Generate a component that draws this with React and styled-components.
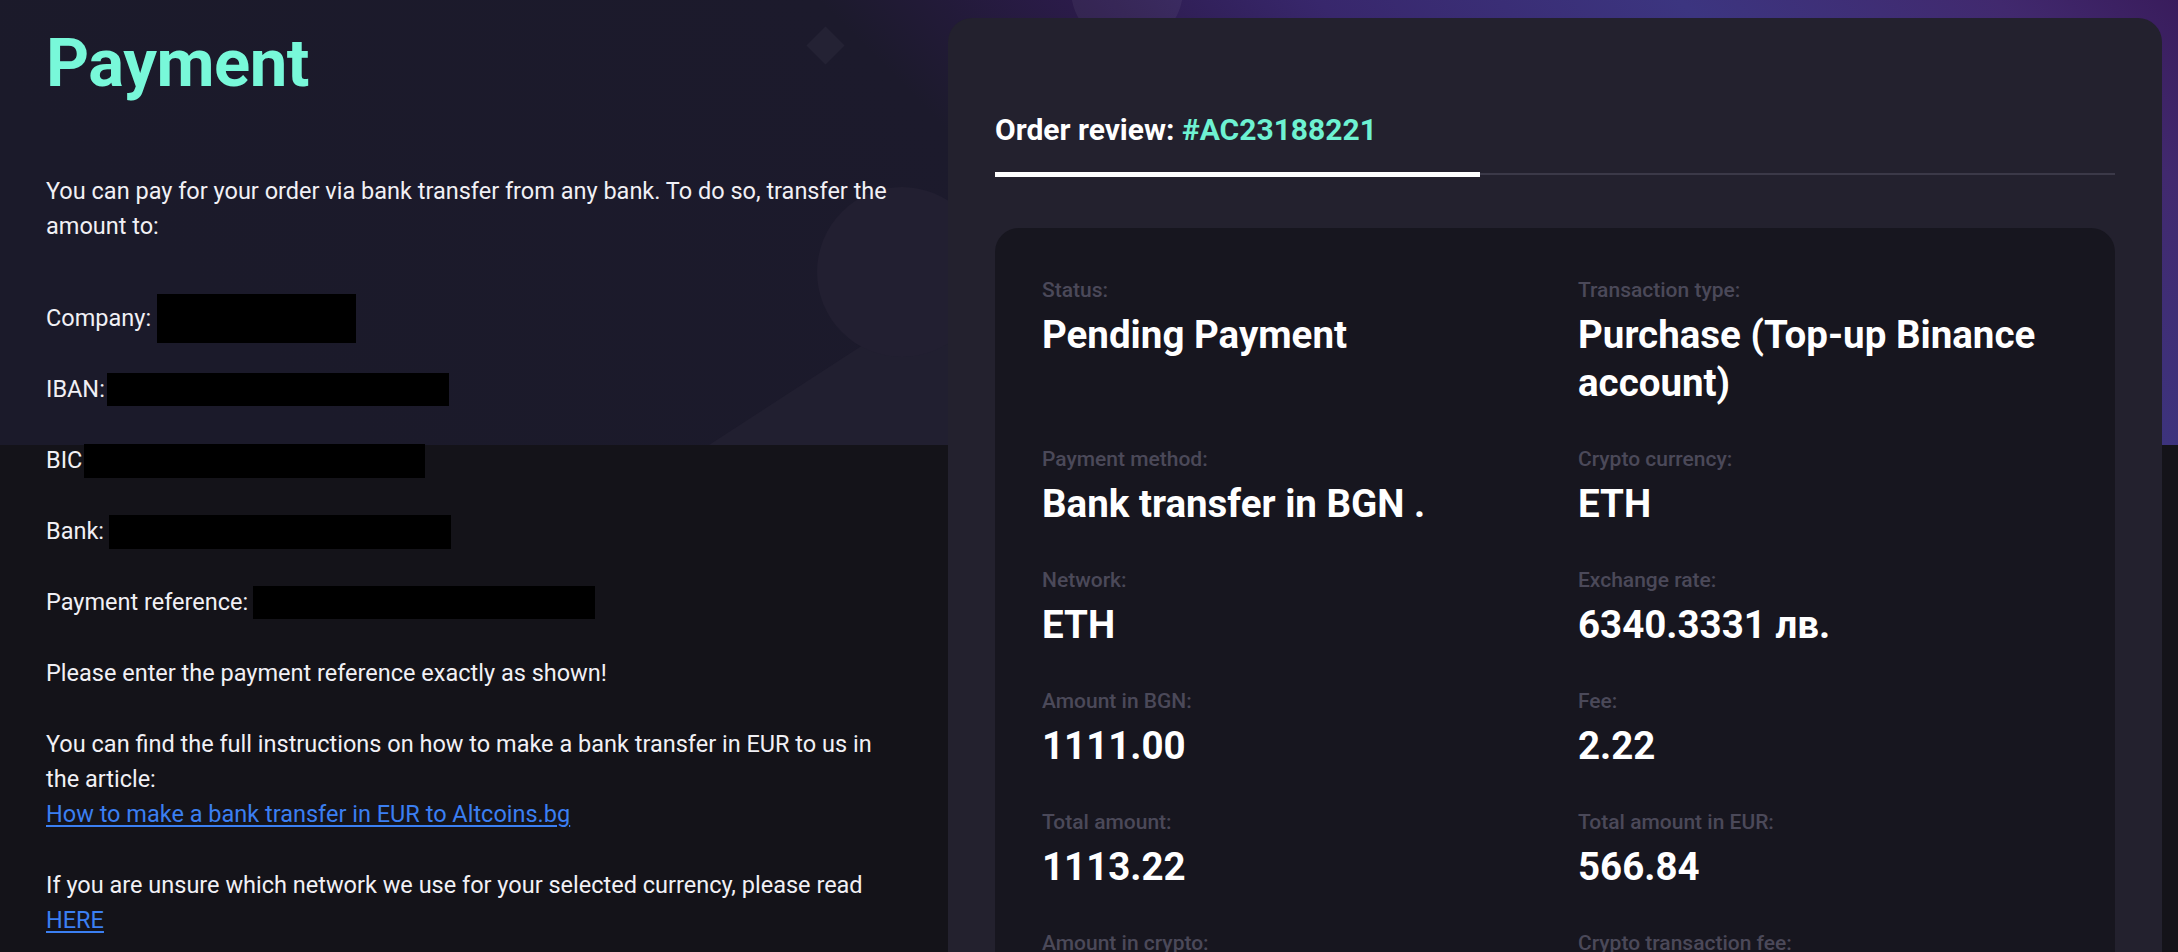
import React from "react";
import styled, { createGlobalStyle } from "styled-components";

const GlobalStyle = createGlobalStyle`
  html, body {
    margin: 0;
    padding: 0;
    background: #141319;
  }
  body {
    font-family: Roboto, "Liberation Sans", Arial, sans-serif;
    color: #f1f0f5;
    -webkit-font-smoothing: antialiased;
  }
  * {
    box-sizing: border-box;
  }
`;

const details = [
  { label: "Status:", value: "Pending Payment" },
  { label: "Transaction type:", value: "Purchase (Top-up Binance account)" },
  { label: "Payment method:", value: "Bank transfer in BGN ." },
  { label: "Crypto currency:", value: "ETH" },
  { label: "Network:", value: "ETH" },
  { label: "Exchange rate:", value: "6340.3331 лв." },
  { label: "Amount in BGN:", value: "1111.00" },
  { label: "Fee:", value: "2.22" },
  { label: "Total amount:", value: "1113.22" },
  { label: "Total amount in EUR:", value: "566.84" },
  { label: "Amount in crypto:", value: "0.17558 ETH" },
  { label: "Crypto transaction fee:", value: "0.00120 ETH" },
];

const Backdrop = () => (
  <BackdropSvg viewBox="0 0 2178 445" preserveAspectRatio="xMinYMin slice">
    <defs>
      <linearGradient id="band" x1="0" y1="0.2" x2="1" y2="0">
        <stop offset="0" stopColor="#1b1a2a" />
        <stop offset="0.4" stopColor="#1c1a2c" />
        <stop offset="0.45" stopColor="#221a38" />
        <stop offset="0.52" stopColor="#2c1b4c" />
        <stop offset="0.62" stopColor="#38276c" />
        <stop offset="0.78" stopColor="#3c3580" />
        <stop offset="0.92" stopColor="#41296e" />
        <stop offset="1" stopColor="#391c5c" />
      </linearGradient>
    </defs>
    <rect x="0" y="0" width="2178" height="445" fill="url(#band)" />
    <polygon points="709,445 960,282 960,445" fill="#211f30" />
    <circle cx="902" cy="272" r="85" fill="#221f31" />
    <rect x="812" y="32" width="27" height="27" fill="#242234" transform="rotate(45 825.5 45.5)" />
    <circle cx="1127" cy="-10" r="56" fill="#ffffff" fillOpacity="0.05" />
  </BackdropSvg>
);

const App = () => {
  return (
    <Page>
      <GlobalStyle />
      <Backdrop />
      <Layout>
        <Instructions>
          <Title>Payment</Title>
          <Intro>
            You can pay for your order via bank transfer from any bank. To do
            so, transfer the
            <br />
            amount to:
          </Intro>
          <Detail>
            Company:
            <Redacted $w={199} $h={49} $gap={6} />
          </Detail>
          <Detail>
            IBAN:
            <Redacted $w={342} $h={33} $gap={2} />
          </Detail>
          <Detail>
            BIC
            <Redacted $w={341} $h={34} $gap={2} />
          </Detail>
          <Detail>
            Bank:
            <Redacted $w={342} $h={34} $gap={5} />
          </Detail>
          <Detail>
            Payment reference:
            <Redacted $w={342} $h={33} $gap={5} />
          </Detail>
          <Paragraph>Please enter the payment reference exactly as shown!</Paragraph>
          <Paragraph>
            You can find the full instructions on how to make a bank transfer in
            EUR to us in
            <br />
            the article:
            <br />
            <Link href="#">How to make a bank transfer in EUR to Altcoins.bg</Link>
          </Paragraph>
          <Paragraph>
            If you are unsure which network we use for your selected currency,
            please read
            <br />
            <Link href="#">HERE</Link>
          </Paragraph>
        </Instructions>

        <ReviewCard>
          <ReviewHeading>
            Order review: <OrderId>#AC23188221</OrderId>
          </ReviewHeading>
          <TabTrack>
            <ActiveTab />
            <TabRest />
          </TabTrack>
          <SummaryPanel>
            {details.map((item) => (
              <Field key={item.label}>
                <FieldLabel>{item.label}</FieldLabel>
                <FieldValue>{item.value}</FieldValue>
              </Field>
            ))}
          </SummaryPanel>
        </ReviewCard>
      </Layout>
    </Page>
  );
};

const Page = styled.div`
  position: relative;
  min-height: 100vh;
  overflow: hidden;
  background: #141319;
`;

const BackdropSvg = styled.svg`
  position: absolute;
  top: 0;
  left: 0;
  width: 100%;
  height: 445px;
  z-index: 0;
`;

const Layout = styled.main`
  position: relative;
  z-index: 1;
  display: grid;
  grid-template-columns: 880px 1214px;
  column-gap: 22px;
  align-items: start;
  padding: 0 16px 0 46px;
`;

const Instructions = styled.section`
  padding-top: 23px;
  font-size: 23.5px;
  line-height: 35px;
`;

const Title = styled.h1`
  margin: 0 0 71px;
  font-size: 67px;
  line-height: 80px;
  font-weight: 700;
  color: #78f8d9;
  letter-spacing: -0.5px;
`;

const Intro = styled.p`
  margin: 0 0 57px;
`;

const Detail = styled.div`
  display: flex;
  align-items: center;
  height: 35px;
  margin-bottom: 36px;
  white-space: nowrap;
`;

const Redacted = styled.span`
  display: inline-block;
  flex: none;
  width: ${(p) => p.$w}px;
  height: ${(p) => p.$h}px;
  margin-left: ${(p) => p.$gap}px;
  background: #000;
`;

const Paragraph = styled.p`
  margin: 0 0 36px;
`;

const Link = styled.a`
  color: #3b7ff2;
  text-decoration: underline;
  text-decoration-thickness: 2px;
  text-underline-offset: 3px;
`;

const ReviewCard = styled.section`
  margin-top: 18px;
  min-height: 1100px;
  padding: 92px 47px 60px;
  background: #23212e;
  border-radius: 24px;
`;

const ReviewHeading = styled.h2`
  margin: 0 0 22px;
  font-size: 30px;
  line-height: 40px;
  font-weight: 700;
  color: #ffffff;
`;

const OrderId = styled.span`
  color: #6ef2d2;
`;

const TabTrack = styled.div`
  display: flex;
  align-items: flex-start;
  margin-bottom: 51px;
`;

const ActiveTab = styled.div`
  width: 485px;
  height: 5px;
  background: #ffffff;
`;

const TabRest = styled.div`
  flex: 1;
  height: 2px;
  margin-top: 1px;
  background: #3b3948;
`;

const SummaryPanel = styled.div`
  display: grid;
  grid-template-columns: 1fr 1fr;
  column-gap: 46px;
  row-gap: 40px;
  align-items: start;
  padding: 50px 47px 60px;
  background: #17161f;
  border-radius: 24px;
`;

const Field = styled.div`
  display: flex;
  flex-direction: column;
`;

const FieldLabel = styled.span`
  margin-bottom: 9px;
  font-size: 21px;
  line-height: 24px;
  font-weight: 500;
  color: #4b4959;
`;

const FieldValue = styled.span`
  font-size: 38.5px;
  line-height: 48px;
  font-weight: 700;
  color: #ffffff;
`;

export default App;
